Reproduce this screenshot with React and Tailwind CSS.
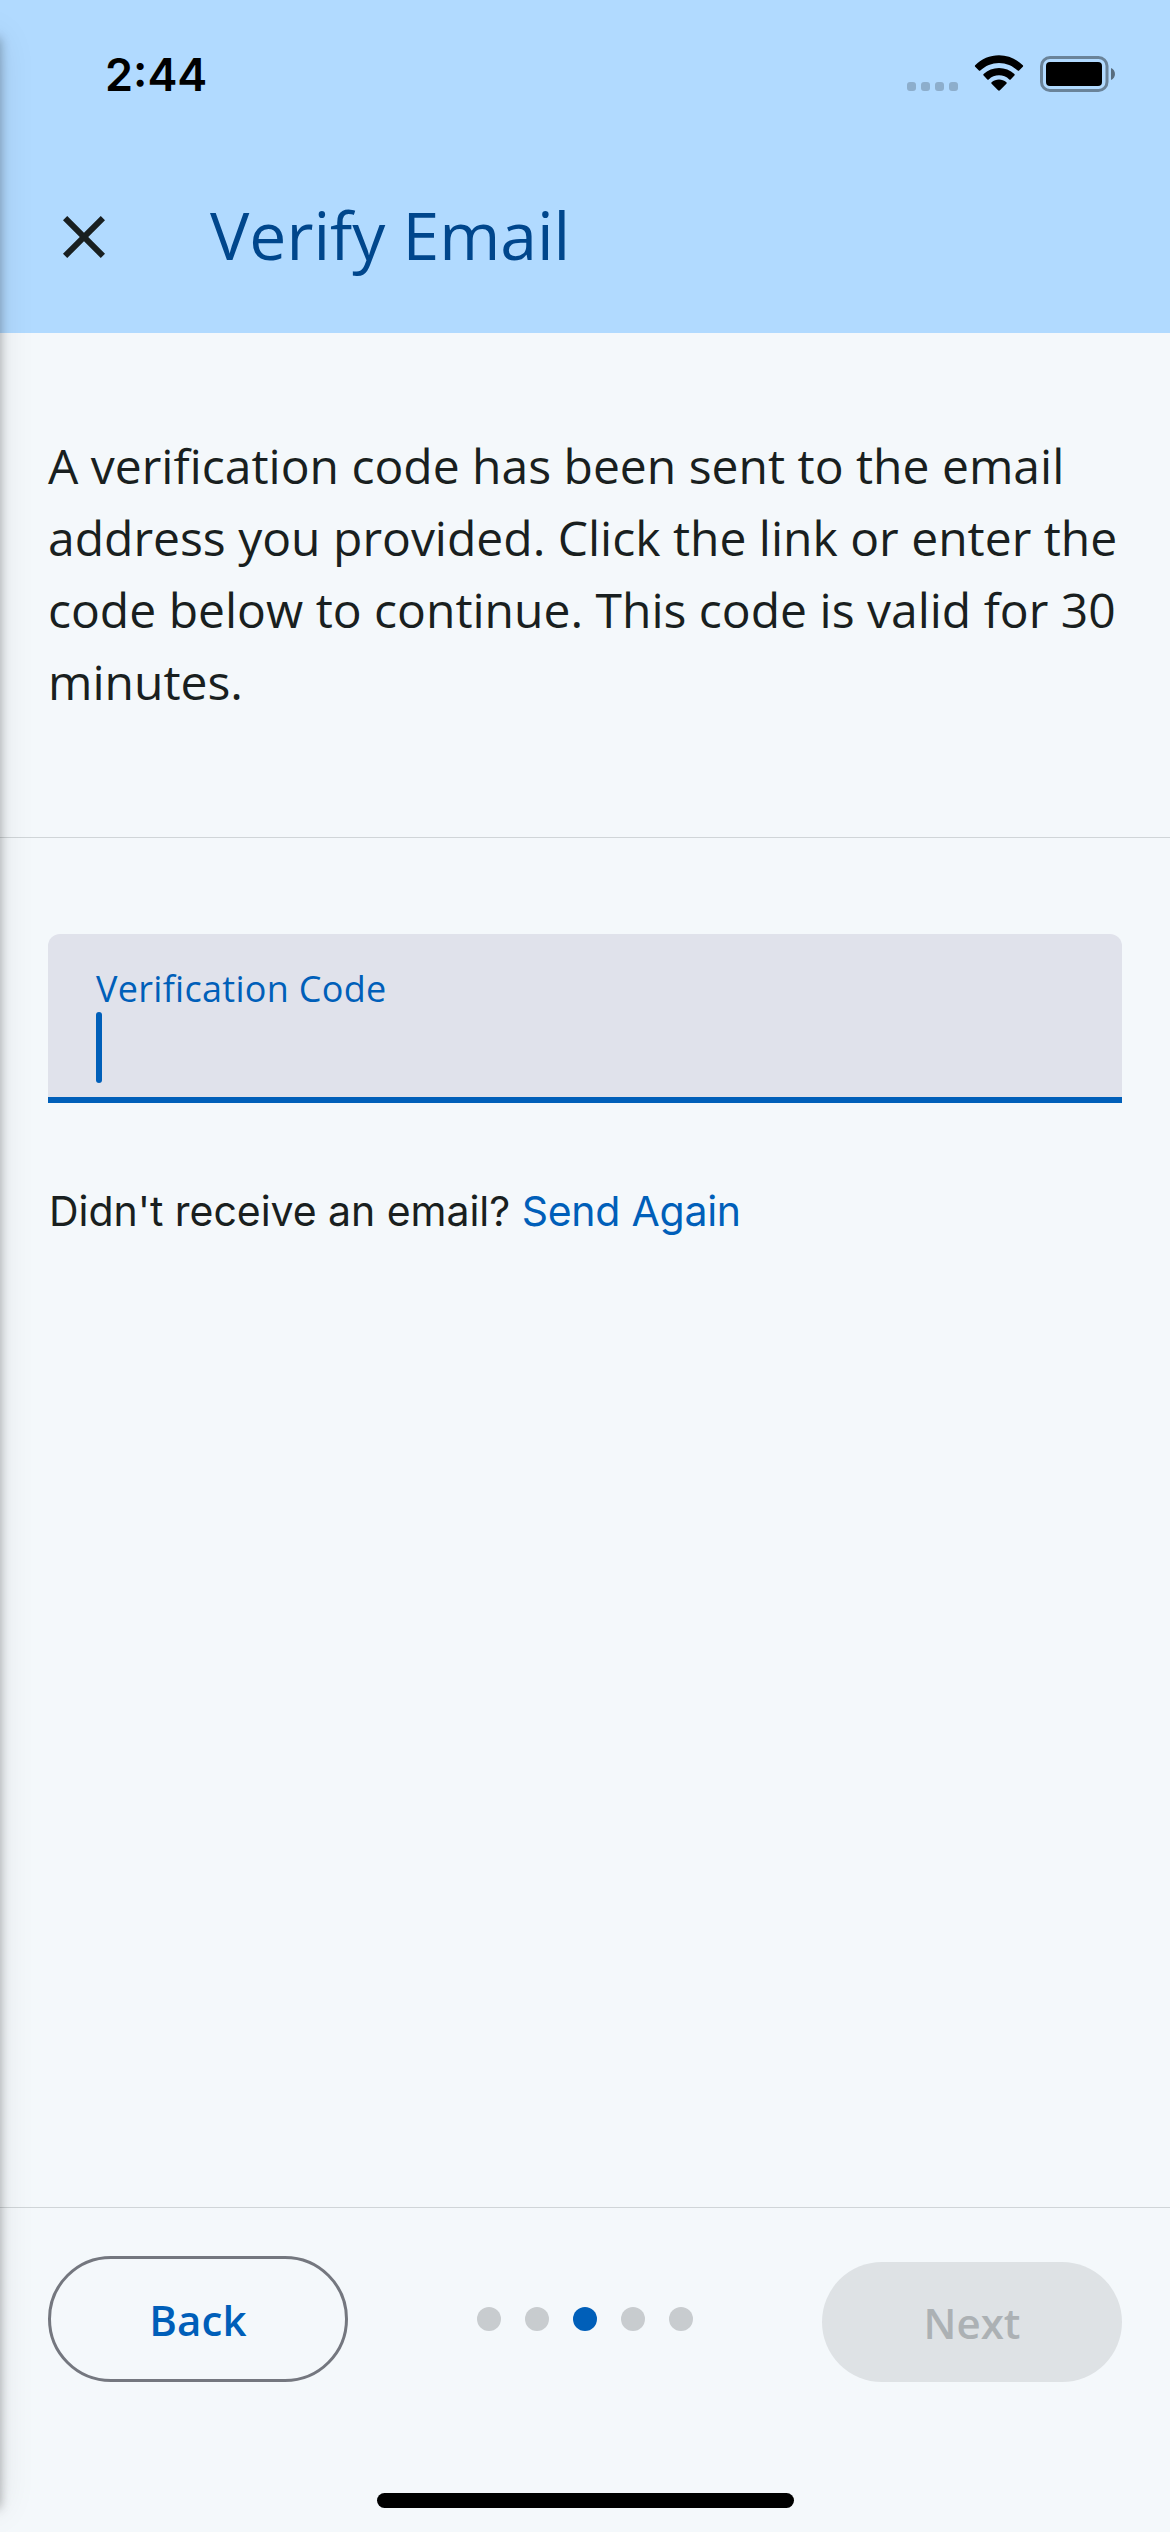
function StatusBar() {
  return (
    <div className="flex h-[140px] items-center justify-between pl-[105px] pr-[54px] pt-[8px]">
      <span className="font-['Inter',sans-serif] text-[45px] font-semibold leading-none text-black">2:44</span>
      <div className="flex items-center">
        <div className="mr-[15px] mt-[25px] flex gap-[5px]">
          {[0, 1, 2, 3].map((i) => (
            <span key={i} className="size-[9px] rounded-[3px] bg-black/20" />
          ))}
        </div>
        <svg className="-mt-[1px] mr-[15px] h-[38px] w-[52px]" viewBox="0 0 50 36" preserveAspectRatio="none">
          <path d="M25 7.500c6.800 0 13.200 2.700 18 7.200.4.400 1 .4 1.300 0l3.600-3.600c.4-.4.4-1 0-1.400C41.800 3.700 33.700.3 25 .3S8.200 3.700 2.100 9.700c-.4.400-.4 1 0 1.400l3.600 3.600c.3.400.9.400 1.300 0 4.800-4.500 11.200-7.200 18-7.200Zm0 11.800c3.700 0 7.200 1.400 9.900 3.900.4.300 1 .3 1.300 0l3.600-3.700c.4-.4.400-1 0-1.400-4-3.800-9.300-5.900-14.800-5.900s-10.800 2.100-14.800 5.900c-.4.4-.4 1 0 1.400l3.600 3.700c.3.3.9.3 1.300 0 2.700-2.500 6.200-3.900 9.900-3.900Zm7.100 7.900c.4-.4.400-1 0-1.400-4.100-3.500-10.100-3.500-14.200 0-.4.400-.4 1 0 1.400l6.200 6.300c.5.500 1.300.5 1.800 0Z" />
        </svg>
        <svg className="h-[36px] w-[76px]" viewBox="0 0 76 36">
          <rect x="1.500" y="1.500" width="65.500" height="33" rx="8.500" fill="none" stroke="black" strokeOpacity=".4" strokeWidth="3" />
          <rect x="6" y="6" width="56" height="24" rx="4" />
          <path d="M71 12c5.300 2 5.300 10 0 12Z" fillOpacity=".5" />
        </svg>
      </div>
    </div>
  );
}

export default function App() {
  return (
    <div className="relative flex h-[2532px] w-[1170px] flex-col overflow-hidden bg-[#f4f8fb] font-['Open_Sans',sans-serif] text-[#191f20]">
      <header className="h-[333px] bg-[#b1daff]">
        <StatusBar />
        <div className="flex h-[193px] items-center pl-[48px]">
          <svg className="size-[72px]" viewBox="0 0 24 24" fill="#191f20">
            <path d="M19 6.410 17.590 5 12 10.590 6.410 5 5 6.410 10.590 12 5 17.590 6.410 19 12 13.410 17.590 19 19 17.590 13.410 12z" />
          </svg>
          <h1 className="mb-[6px] ml-[90px] text-[66px] leading-none text-[#00468c]">Verify Email</h1>
        </div>
      </header>
      <section className="h-[505px] border-b border-[#d0d5d8] px-[48px] pt-[97px] text-[48px] leading-[72px]">
        <p>
          A verification code has been sent to the email<br />
          address you provided. Click the link or enter the<br />
          code below to continue. This code is valid for 30<br />
          minutes.
        </p>
      </section>
      <main className="flex-1 px-[48px] pt-[96px]">
        <div className="h-[169px] rounded-t-[12px] border-b-[6px] border-[#005fb9] bg-[#e0e2eb] pl-[48px] pt-[35px]">
          <div className="text-[36px] leading-[40px] tracking-[0.3px] text-[#005fb9]">Verification Code</div>
          <div className="mt-[3px] h-[71px] w-[6px] rounded-full bg-[#005fb9]" />
        </div>
        <p className="mt-[75px] pl-px font-['Inter',sans-serif] text-[41px] leading-[66px] tracking-[-0.04px]">
          Didn't receive an email? <span className="tracking-[-0.25px] text-[#005fb9]">Send Again</span>
        </p>
      </main>
      <footer className="relative flex h-[325px] items-start justify-between border-t border-[#d0d5d8] px-[48px] pt-[48px]">
        <button className="h-[126px] w-[300px] rounded-full border-[3px] border-[#74777f] text-[42px] font-semibold tracking-[0.1px] text-[#005fb9]">Back</button>
        <div className="mt-[51px] flex gap-[24px]">
          {[0, 1, 2, 3, 4].map((i) => (
            <span key={i} className={i === 2 ? "size-[24px] rounded-full bg-[#005fb9]" : "size-[24px] rounded-full bg-[#c8cccf]"} />
          ))}
        </div>
        <button className="mt-[6px] h-[120px] w-[300px] rounded-full bg-[#dee2e5] text-[42px] font-semibold text-[#acb1b4]">Next</button>
        <div className="absolute bottom-[24px] left-[377px] h-[15px] w-[417px] rounded-full bg-black" />
      </footer>
      <div className="absolute bottom-[24px] right-full top-[38px] w-[100px] shadow-[0_0_10px_rgba(0,0,0,0.3),0_0_36px_rgba(0,0,0,0.1)]" />
    </div>
  );
}
